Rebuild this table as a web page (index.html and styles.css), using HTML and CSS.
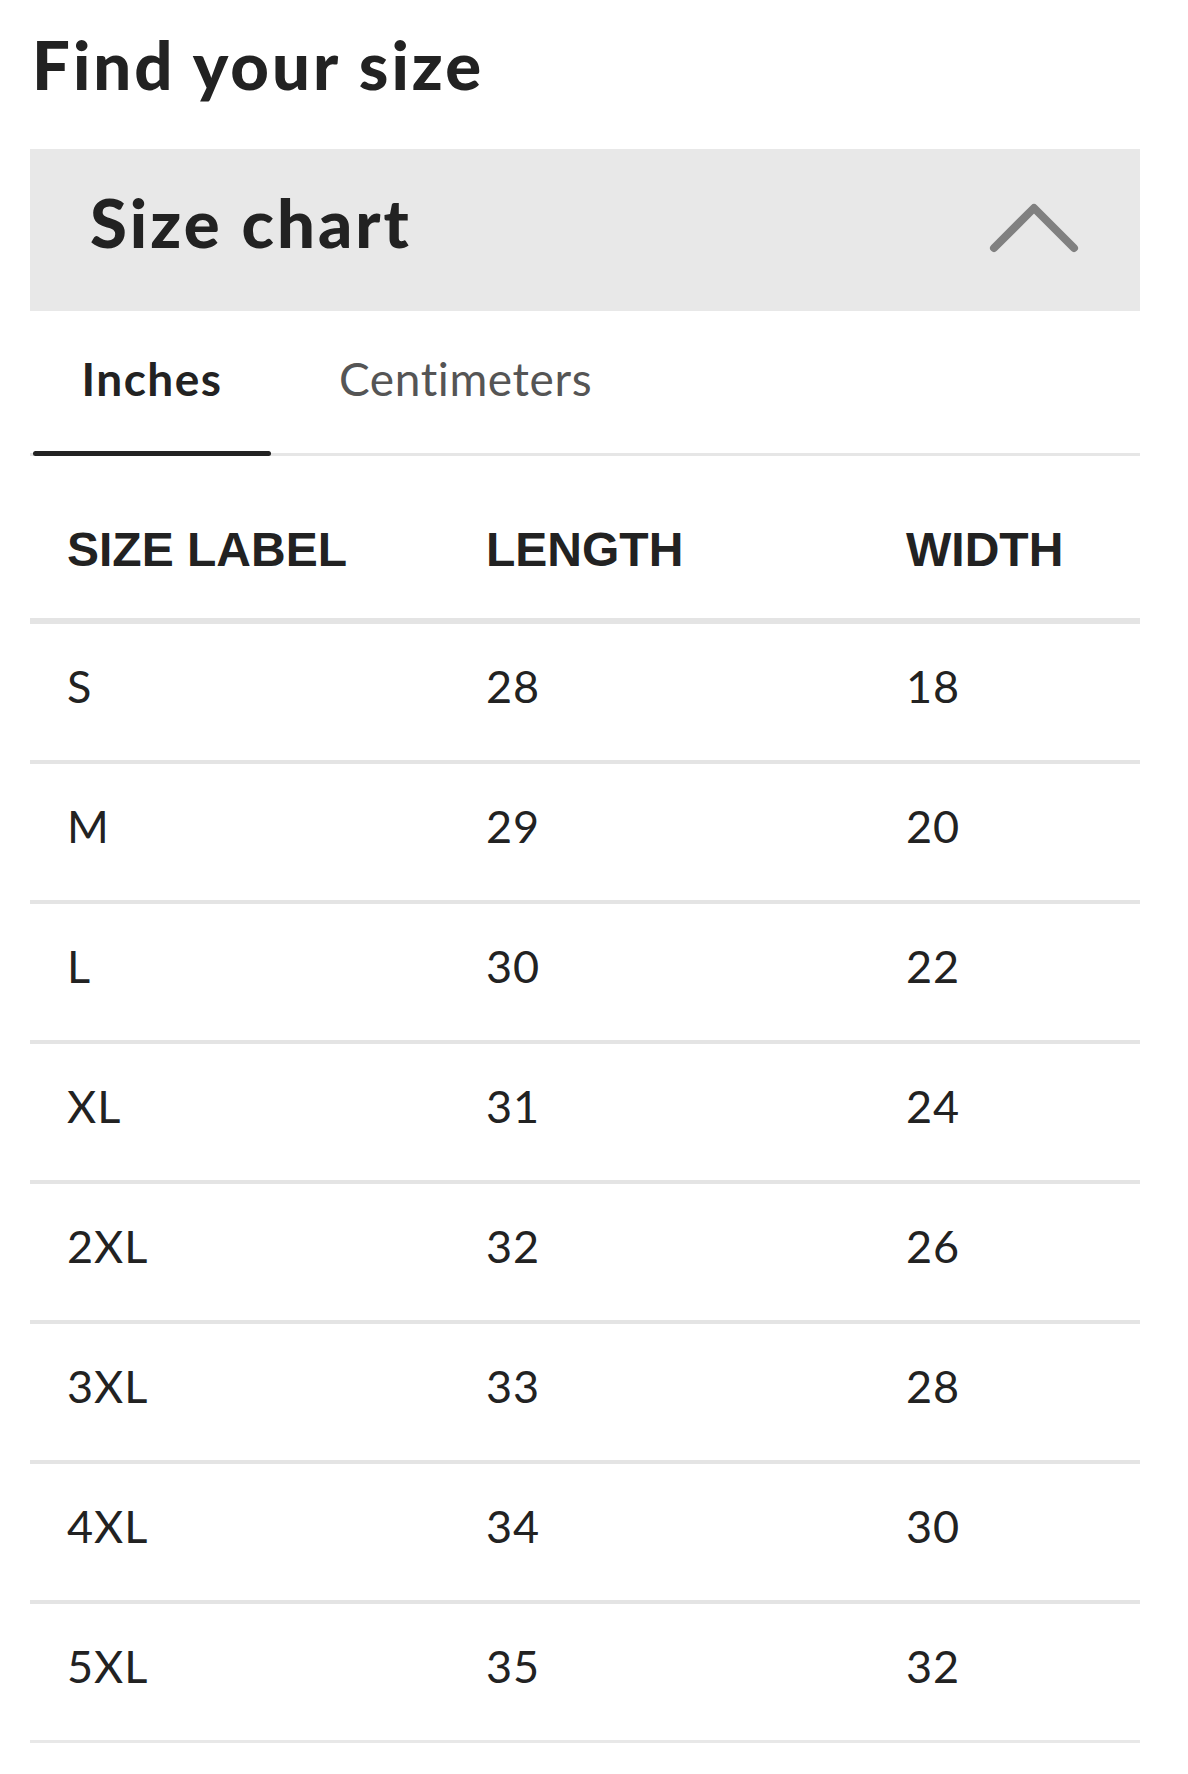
FILE: index.html
```html
<!DOCTYPE html>
<html lang="en">
<head>
<meta charset="utf-8">
<title>Find your size</title>
<link rel="stylesheet" href="styles.css">
</head>
<body>
<main class="page">
  <h1 class="title">Find your size</h1>
  <section class="accordion">
    <div class="acc-head">
      <h2 class="acc-title">Size chart</h2>
      <svg class="chevron" width="96" height="56" viewBox="0 0 96 56" aria-hidden="true">
        <path d="M8 47 L48 7 L88 47" fill="none" stroke="#808080" stroke-width="8" stroke-linecap="round" stroke-linejoin="round"/>
      </svg>
    </div>
    <div class="tabs">
      <button class="tab tab-active">Inches</button>
      <button class="tab">Centimeters</button>
    </div>
    <div class="chart">
      <div class="row row-head">
        <div class="cell">SIZE LABEL</div>
        <div class="cell">LENGTH</div>
        <div class="cell">WIDTH</div>
      </div>
      <div class="row"><div class="cell">S</div><div class="cell">28</div><div class="cell">18</div></div>
      <div class="row"><div class="cell">M</div><div class="cell">29</div><div class="cell">20</div></div>
      <div class="row"><div class="cell">L</div><div class="cell">30</div><div class="cell">22</div></div>
      <div class="row"><div class="cell">XL</div><div class="cell">31</div><div class="cell">24</div></div>
      <div class="row"><div class="cell">2XL</div><div class="cell">32</div><div class="cell">26</div></div>
      <div class="row"><div class="cell">3XL</div><div class="cell">33</div><div class="cell">28</div></div>
      <div class="row"><div class="cell">4XL</div><div class="cell">34</div><div class="cell">30</div></div>
      <div class="row row-last"><div class="cell">5XL</div><div class="cell">35</div><div class="cell">32</div></div>
    </div>
  </section>
</main>
</body>
</html>
```
FILE: styles.css
```css
* {
  box-sizing: border-box;
}

html, body {
  margin: 0;
  padding: 0;
  background: #ffffff;
}

body {
  font-family: Lato, "Noto Sans", sans-serif;
  color: #222222;
}

.page {
  padding: 24px 48px 0 30px;
}

.title {
  margin: 0 0 45px 2px;
  font-size: 67px;
  line-height: 1.2;
  font-weight: 900;
  letter-spacing: 3px;
}

.acc-head {
  height: 162px;
  background: #e8e8e8;
  display: flex;
  align-items: center;
  justify-content: space-between;
  padding: 0 58px 16px 60px;
}

.acc-title {
  margin: 0;
  font-size: 67px;
  line-height: 1.2;
  font-weight: 900;
  letter-spacing: 3px;
}

.chevron {
  display: block;
  margin-top: 14px;
}

.tabs {
  display: flex;
  border-bottom: 3px solid #e6e6e6;
  padding-left: 3px;
}

.tab {
  position: relative;
  background: none;
  border: none;
  margin: 0;
  font-family: Lato, "Noto Sans", sans-serif;
  font-size: 46px;
  line-height: 1.2;
  padding: 40px 0 46px;
  color: #555555;
  font-weight: 400;
  letter-spacing: 0.6px;
  cursor: pointer;
}

.tab-active {
  width: 238px;
  text-align: center;
  color: #222222;
  font-weight: 700;
  letter-spacing: 1.5px;
  margin-right: 19px;
}

.tab-active::after {
  content: "";
  position: absolute;
  left: 0;
  right: 0;
  bottom: -3px;
  height: 5px;
  border-radius: 3px;
  background: #222222;
}

.tab + .tab {
  padding-left: 49px;
}

.row {
  display: grid;
  grid-template-columns: 419px 420px 1fr;
  padding-left: 37px;
  height: 140px;
  border-bottom: 4px solid #e4e4e4;
  font-size: 45px;
  line-height: 1.2;
  letter-spacing: 1px;
  padding-top: 35px;
}

.row-head {
  height: 168px;
  border-bottom: 6px solid #e4e4e4;
  font-family: "Liberation Sans", Arial, sans-serif;
  font-weight: 700;
  font-size: 48px;
  line-height: 1.15;
  letter-spacing: 0;
  padding-top: 66px;
}

.row-last {
  border-bottom: 3px solid #e8e8e8;
  height: 139px;
}
```
